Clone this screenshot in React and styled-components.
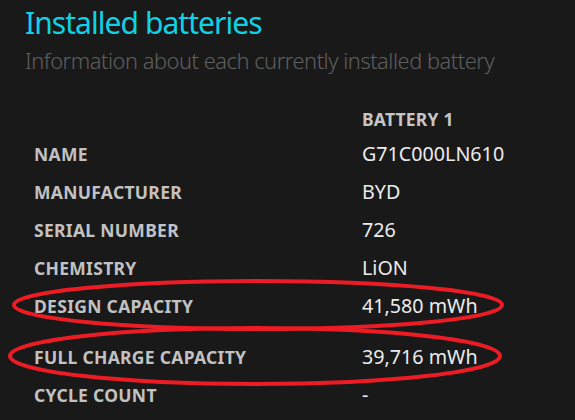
import React from "react";
import styled, { createGlobalStyle } from "styled-components";

const GlobalStyle = createGlobalStyle`
  html, body {
    margin: 0;
    padding: 0;
    background: #191919;
  }
  body {
    font-family: "Noto Sans", "Open Sans", sans-serif;
  }
`;

const Page = styled.div`
  position: relative;
  width: 575px;
  height: 420px;
  overflow: hidden;
  background: #191919;
  padding: 4px 0 0 25px;
  box-sizing: border-box;
`;

const Title = styled.h1`
  margin: 0;
  font-size: 30px;
  font-weight: 400;
  line-height: 38px;
  letter-spacing: -0.95px;
  color: #10d2e6;
`;

const Subtitle = styled.p`
  margin: 4px 0 0;
  font-size: 21.8px;
  font-weight: 300;
  line-height: 30px;
  letter-spacing: -0.45px;
  color: #5f5f5f;
`;

const Table = styled.div`
  display: grid;
  grid-template-columns: 328px auto;
  margin: 31px 0 0 9px;
`;

const HeadCell = styled.div`
  font-size: 17.5px;
  font-weight: 700;
  color: #c6c6c6;
  line-height: 24px;
  padding-bottom: 4px;
  letter-spacing: 0.2px;
`;

const Label = styled.div`
  font-size: 17.5px;
  font-weight: 700;
  color: #c2c2c2;
  line-height: 24px;
  padding: ${(p) => (p.$gap ? "20px" : "7px")} 0 7px;
  letter-spacing: 0.3px;
`;

const Value = styled.div`
  font-size: 19.7px;
  font-weight: 400;
  color: #ececec;
  line-height: 24px;
  padding: ${(p) => (p.$gap ? "20px" : "7px")} 0 7px;
`;

const Marks = styled.svg`
  position: absolute;
  left: 0;
  top: 0;
  pointer-events: none;
`;

const rows = [
  ["NAME", "G71C000LN610"],
  ["MANUFACTURER", "BYD"],
  ["SERIAL NUMBER", "726"],
  ["CHEMISTRY", "LiON"],
  ["DESIGN CAPACITY", "41,580 mWh"],
  ["FULL CHARGE CAPACITY", "39,716 mWh", true],
  ["CYCLE COUNT", "-"],
];

export default function App() {
  return (
    <>
      <GlobalStyle />
      <Page>
        <Title>Installed batteries</Title>
        <Subtitle>Information about each currently installed battery</Subtitle>
        <Table>
          <HeadCell />
          <HeadCell>BATTERY 1</HeadCell>
          {rows.map(([label, value, gap]) => (
            <React.Fragment key={label}>
              <Label $gap={gap}>{label}</Label>
              <Value $gap={gap}>{value}</Value>
            </React.Fragment>
          ))}
        </Table>
        <Marks width="575" height="420" viewBox="0 0 575 420">
          <ellipse cx="258" cy="305" rx="244" ry="24" fill="none" stroke="#ed1c24" strokeWidth="4" />
          <ellipse cx="255" cy="356" rx="245" ry="28" fill="none" stroke="#ed1c24" strokeWidth="4" />
        </Marks>
      </Page>
    </>
  );
}
